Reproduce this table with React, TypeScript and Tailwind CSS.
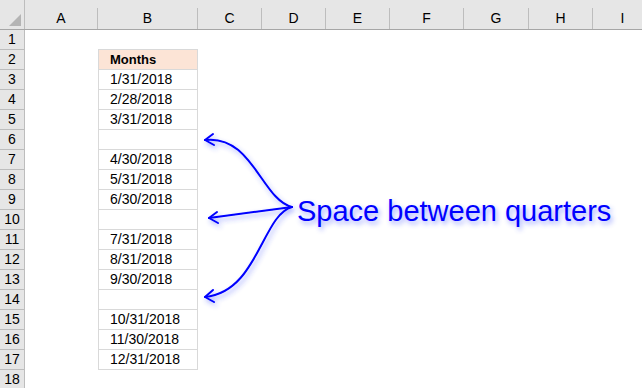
const cols = [
  { name: "A", w: "w-[73px]" },
  { name: "B", w: "w-[100px]" },
  { name: "C", w: "w-[64px]" },
  { name: "D", w: "w-[64px]" },
  { name: "E", w: "w-[64px]" },
  { name: "F", w: "w-[74px]" },
  { name: "G", w: "w-[65px]" },
  { name: "H", w: "w-[64px]" },
  { name: "I", w: "w-[60px]" },
];

// column B contents, index = row - 1
const months: (string | null)[] = [
  null,
  "Months",
  "1/31/2018",
  "2/28/2018",
  "3/31/2018",
  "",
  "4/30/2018",
  "5/31/2018",
  "6/30/2018",
  "",
  "7/31/2018",
  "8/31/2018",
  "9/30/2018",
  "",
  "10/31/2018",
  "11/30/2018",
  "12/31/2018",
  null,
];

const Arrows = () => (
  <svg
    className="absolute left-0 top-0 pointer-events-none"
    width="642"
    height="388"
    viewBox="0 0 642 388"
    fill="none"
  >
    <defs>
      <filter id="glow" x="-20%" y="-20%" width="140%" height="140%">
        <feDropShadow dx="2" dy="3" stdDeviation="2.5" floodColor="#3344ff" floodOpacity="0.45" />
      </filter>
    </defs>
    <g stroke="#0000ff" strokeWidth="2" strokeLinecap="round" strokeLinejoin="round" filter="url(#glow)">
      <path d="M292 207 C 262 200, 252 134, 205 140" />
      <path d="M213 134 L205 140 L214 145" />
      <path d="M292 207 L209 218" />
      <path d="M217 212 L209 218 L218 223" />
      <path d="M292 207 C 262 215, 258 292, 205 297" />
      <path d="M213 290 L205 297 L214 302" />
    </g>
  </svg>
);

export default function App() {
  return (
    <div className="relative w-[642px] h-[388px] overflow-hidden bg-white font-['Liberation_Sans',sans-serif] text-[14px] text-black">
      {/* column headers */}
      <div className="flex h-[30px] bg-[#e6e6e6] border-b border-[#a6a6a6]">
        <div className="relative w-[25px] shrink-0 border-r border-[#bdbdbd]">
          <div className="absolute right-[3px] bottom-[3px] w-0 h-0 border-l-[12px] border-l-transparent border-b-[12px] border-b-[#b4b4b4]" />
        </div>
        {cols.map((c) => (
          <div key={c.name} className={`${c.w} shrink-0 flex flex-col`}>
            <div className="h-[10px]" />
            <div className="flex-1 flex items-center justify-center border-r border-[#bdbdbd] text-[14px]">
              {c.name}
            </div>
          </div>
        ))}
      </div>

      {/* rows */}
      {months.map((val, i) => {
        const row = i + 1;
        const inTable = val !== null;
        const isHead = row === 2;
        return (
          <div key={row} className="flex h-5">
            <div className="w-[25px] shrink-0 flex items-center justify-center bg-[#e6e6e6] border-r border-b border-[#bdbdbd] text-[14px]">
              {row}
            </div>
            <div className="w-[73px] shrink-0" />
            <div
              className={`w-[100px] shrink-0 flex items-center pl-[11px] ${
                inTable ? "border-x border-b border-[#d9d9d9]" : row === 1 ? "border-b border-[#d9d9d9]" : ""
              } ${isHead ? "bg-[#fce4d6] font-bold text-[13px]" : ""}`}
            >
              {val}
            </div>
          </div>
        );
      })}

      <Arrows />

      <div className="absolute left-[297px] top-[197px] text-[29px] leading-none text-[#0000ff] [text-shadow:2px_3px_5px_rgba(40,60,255,0.45)]">
        Space between quarters
      </div>
    </div>
  );
}
